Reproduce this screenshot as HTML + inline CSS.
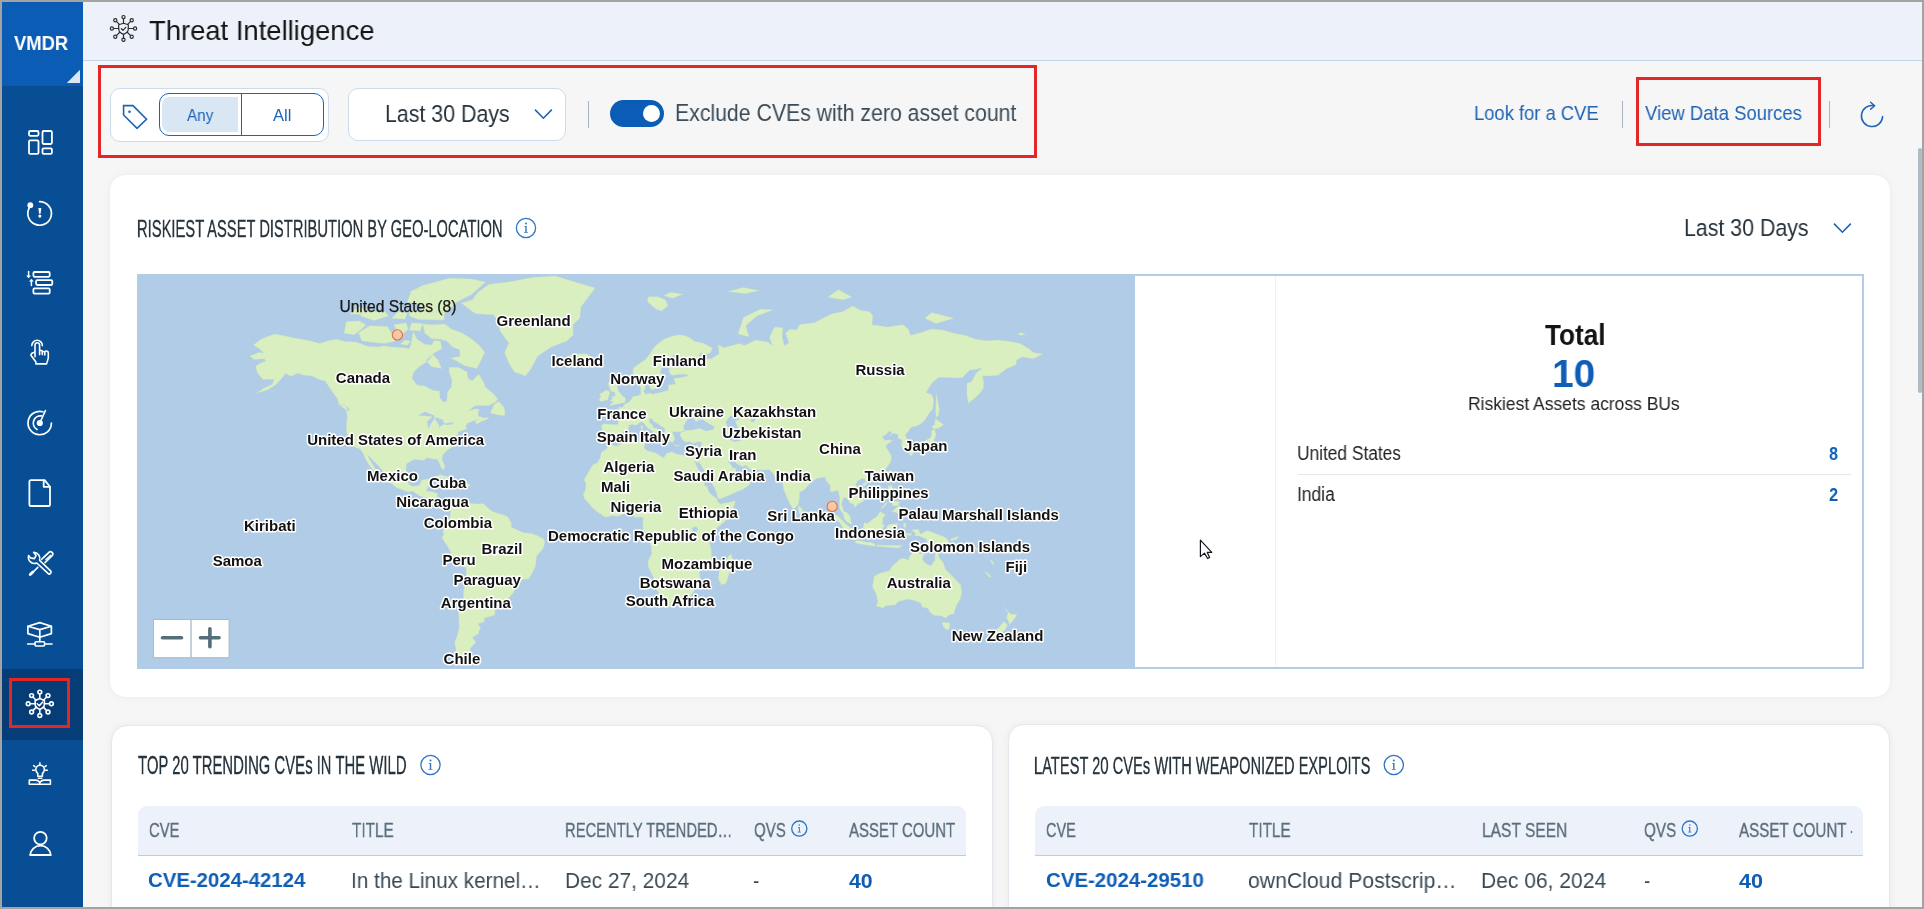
<!DOCTYPE html>
<html><head><meta charset="utf-8">
<style>
*{box-sizing:border-box;margin:0;padding:0}
html,body{width:1924px;height:909px;overflow:hidden;background:#a3a3a3;font-family:"Liberation Sans",sans-serif}
.bx{position:absolute}
.t{position:absolute;white-space:nowrap;line-height:1;transform-origin:0 0;will-change:transform}
.red{position:absolute;border:3px solid #e32727}
svg{position:absolute;overflow:visible}
</style></head><body>
<div class="bx" style="left:2px;top:2px;width:1920px;height:905px;background:#f6f6f6"></div>
<div class="bx" style="left:2px;top:2px;width:81px;height:905px;background:#084e94"></div>
<div class="bx" style="left:2px;top:2px;width:81px;height:84px;background:#0a5cb4"></div>
<svg style="left:0;top:0" width="90" height="90"><path d="M66.8 82.9 L80 82.9 L80 69.7 Z" fill="#dde7f3"/></svg>
<div class="bx" style="left:2px;top:669px;width:81px;height:71px;background:#073d77"></div>
<div class="red" style="left:9px;top:678px;width:61px;height:50px"></div>
<div class="bx" style="left:83px;top:2px;width:1839px;height:59px;background:#edf2fa;border-bottom:1px solid #c3d6ec"></div>

<!-- toolbar -->
<div class="red" style="left:98px;top:65px;width:939px;height:93px"></div>
<div class="bx" style="left:110px;top:88px;width:219px;height:54px;background:#fff;border:1px solid #c9dcf0;border-radius:10px"></div>
<div class="bx" style="left:159px;top:93px;width:165px;height:43px;border:1.3px solid #1d63b6;border-radius:10px;background:#fff"></div>
<div class="bx" style="left:162px;top:97px;width:76px;height:35px;background:#d9e6f4;border-radius:8px 0 0 8px"></div>
<div class="bx" style="left:241px;top:93.5px;width:1.2px;height:42px;background:#1d63b6"></div>
<div class="bx" style="left:348px;top:88px;width:218px;height:53px;background:#fff;border:1px solid #c9dcf0;border-radius:10px"></div>
<div class="bx" style="left:587.5px;top:101px;width:1.5px;height:27px;background:#a9b6c2"></div>
<div class="bx" style="left:610px;top:100px;width:54px;height:27px;border-radius:14px;background:#0b5cb5"></div>
<div class="bx" style="left:642.5px;top:104.8px;width:17px;height:17px;border-radius:50%;background:#fff"></div>
<div class="bx" style="left:1622px;top:101px;width:1.3px;height:27px;background:#a9b6c2"></div>
<div class="red" style="left:1636px;top:77px;width:185px;height:69px"></div>
<div class="bx" style="left:1829px;top:101px;width:1.3px;height:27px;background:#a9b6c2"></div>

<!-- map card -->
<div class="bx" style="left:110px;top:175px;width:1780px;height:522px;background:#fff;border-radius:16px;box-shadow:0 0 8px rgba(0,0,0,.05)"></div>
<div class="bx" style="left:137px;top:274px;width:1727px;height:395px;border:2px solid #b3cde8;background:#fff"></div>
<div class="bx" style="left:1275px;top:276px;width:1px;height:391px;background:#eef0f2"></div>
<div class="bx" style="left:1298px;top:474px;width:553px;height:1px;background:#e3e8ec"></div>
<div class="bx" style="left:138px;top:275px;width:997px;height:393px;background:#b0cce6;overflow:hidden">
<svg style="left:0;top:0" width="997" height="393" viewBox="0 0 997 393"><path d="M312.5 232.7L315.6 230.9L316.7 228.7L320.1 226.9L324.0 224.6L326.3 226.7L328.5 225.1L332.9 228.5L341.1 228.9L345.5 228.5L348.8 232.0L354.4 236.5L362.1 238.9L368.7 241.1L371.0 243.6L373.2 248.0L373.2 252.0L377.6 254.2L385.3 257.5L393.1 258.4L398.6 260.2L405.9 264.0L406.8 268.0L405.2 273.5L398.6 280.9L397.5 291.1L394.2 298.0L390.9 303.8L385.3 304.5L377.6 309.7L376.0 316.8L371.0 322.8L366.5 329.5L362.3 332.5L358.8 332.2L354.8 330.5L357.2 335.7L356.6 340.3L346.6 342.9L346.2 347.1L340.0 348.7L342.6 352.4L340.0 358.9L334.4 362.4L337.8 367.2L332.2 373.5L332.7 379.6L336.0 387.2L331.1 388.7L324.5 386.3L319.0 380.2L316.7 367.2L319.0 361.6L321.2 353.4L320.7 337.8L325.4 327.7L325.6 315.6L328.2 303.8L328.2 293.2L324.5 290.0L315.0 282.7L311.2 274.2L307.4 268.0L303.9 262.4L306.1 259.5L304.8 256.9L306.6 252.0L309.0 248.5L311.9 243.1L312.5 236.5L310.8 233.8L307.9 232.3L306.1 235.4L303.0 234.3L300.1 233.1L294.0 229.8L294.2 227.1L290.2 223.1L285.8 222.0L281.3 220.8L274.7 216.1L270.3 217.0L267.0 215.8L259.2 212.9L250.4 206.5L251.0 203.0L248.1 199.7L243.7 194.8L239.3 189.6L235.5 186.0L229.8 179.7L231.1 183.6L234.9 189.6L239.5 197.9L240.6 200.4L236.0 196.0L230.4 189.1L227.1 183.1L224.7 177.5L221.6 173.8L216.9 172.3L212.7 164.9L208.5 157.5L208.3 150.6L209.4 141.6L207.9 135.7L211.2 136.0L211.2 133.4L206.1 130.2L201.0 128.8L199.5 123.8L195.0 117.7L191.7 113.1L187.3 106.1L181.8 104.8L174.0 100.9L166.3 100.3L159.6 98.3L153.0 101.3L147.5 98.6L143.0 104.2L137.5 110.0L129.8 114.7L119.1 118.0L125.3 113.4L134.2 109.3L136.4 104.5L129.8 104.2L125.3 104.8L119.8 98.6L117.6 91.8L119.8 89.4L127.6 85.9L126.4 83.8L116.0 84.5L111.8 80.9L120.9 77.6L125.8 77.9L121.4 73.8L115.4 70.0L122.0 65.0L127.6 62.2L136.8 59.0L147.5 61.0L156.3 63.0L171.8 65.8L181.8 68.5L188.4 66.2L198.4 64.2L207.2 66.6L218.3 67.0L229.3 71.2L240.4 72.0L245.9 70.8L253.7 72.0L265.8 72.7L271.4 73.8L273.6 66.2L275.1 56.5L279.1 64.2L286.9 69.3L293.5 70.0L296.2 65.4L302.4 66.2L303.9 73.8L295.7 78.3L292.4 83.0L289.1 86.6L281.3 91.8L275.8 96.9L274.0 103.5L279.1 110.0L286.9 110.9L294.6 115.3L301.7 116.2L301.9 122.9L305.7 127.3L309.0 125.8L309.2 117.7L313.4 111.5L314.1 105.2L311.2 97.6L311.2 92.2L320.9 92.5L328.9 96.9L330.0 103.5L334.4 105.8L340.6 99.3L345.5 106.8L347.7 112.5L354.4 117.7L359.9 124.1L357.5 127.0L351.0 130.5L341.1 130.5L336.7 131.1L330.0 136.0L337.8 133.7L341.5 134.5L340.0 137.4L340.4 141.0L346.6 143.2L351.0 141.8L348.8 144.6L343.3 146.5L338.2 149.2L337.3 146.0L341.1 144.3L335.5 145.7L328.9 148.7L327.6 151.4L328.9 153.8L325.6 155.1L320.1 156.9L319.6 160.1L317.4 161.6L315.6 166.2L316.7 170.8L313.4 172.5L309.0 175.5L304.6 179.9L303.9 184.1L306.8 190.8L305.7 195.3L302.8 192.0L301.0 187.2L299.0 184.1L295.7 184.3L289.1 182.6L285.8 185.5L281.3 184.8L275.8 184.6L268.3 188.9L268.1 195.5L267.4 201.8L271.4 209.5L274.7 211.3L281.3 210.6L283.8 204.9L291.3 203.7L290.2 210.6L288.6 216.3L293.5 216.5L299.7 218.6L299.0 225.3L298.6 228.0L301.3 230.9L307.9 230.7ZM387.5 100.9L393.1 93.5L399.7 81.2L413.0 72.0L428.5 66.2L435.1 60.2L435.1 49.8L441.8 43.3L442.9 31.9L457.2 13.0L439.5 7.7L417.4 1.1L395.3 2.2L373.2 6.6L351.0 9.3L340.0 17.2L334.4 24.7L323.4 28.1L331.1 34.2L337.8 38.8L355.5 39.7L359.9 45.5L362.1 56.1L366.5 62.2L371.0 68.1L366.5 77.6L371.0 88.4L376.5 96.9ZM346.8 77.2L341.1 70.0L332.2 63.0L324.5 58.2L313.4 54.0L306.8 49.0L295.7 49.8L284.7 49.0L286.9 58.2L293.5 63.8L302.4 64.2L309.0 66.2L314.5 72.0L321.2 74.6L322.3 81.2L312.3 83.0L317.8 85.5L326.7 90.8L338.9 93.5L343.3 84.8ZM220.5 57.8L223.8 65.8L233.8 67.3L247.0 68.5L257.0 66.2L253.7 58.2L249.3 51.5L231.6 50.7ZM206.1 58.2L216.1 59.8L223.8 54.0L228.0 49.8L221.6 45.9L208.3 46.4ZM284.7 37.0L309.0 37.5L317.8 27.6L333.3 19.7L347.7 7.1L333.3 3.9L311.2 3.3L284.7 10.4L271.4 17.2L280.2 24.7ZM269.2 27.1L280.2 29.5L293.5 22.2L286.9 13.0L273.6 15.6ZM271.4 41.1L280.2 44.6L305.7 45.1L306.8 37.9L289.1 36.5L271.4 35.2ZM222.7 41.1L236.0 45.5L250.4 41.1L247.0 36.5L233.8 36.5L223.8 35.2ZM253.7 43.3L267.0 44.2L269.2 37.9L260.3 36.5ZM258.1 54.0L265.8 58.2L270.3 54.0L268.1 47.7L255.9 49.8ZM271.4 55.3L282.4 56.1L284.7 48.5L273.6 47.7ZM211.6 38.8L224.9 39.7L229.3 34.2L220.5 31.9ZM288.0 85.5L293.5 91.8L303.5 93.5L300.1 84.8L294.6 79.4ZM262.5 68.9L269.2 70.4L272.5 66.2L267.0 65.0ZM360.8 126.4L366.1 132.5L367.2 137.9L366.3 140.7L360.1 139.9L352.4 137.9L356.3 129.1ZM295.7 202.8L302.4 199.7L312.3 202.5L319.8 206.7L312.3 207.4L311.2 203.7L304.6 203.2ZM319.0 210.8L322.7 207.4L330.0 208.3L332.7 210.4L325.6 212.7ZM310.5 210.8L315.2 211.7L312.3 212.4ZM199.7 128.8L207.2 131.1L211.0 136.0L207.2 134.3ZM471.4 168.8L469.6 166.7L467.4 165.7L464.1 166.2L464.3 161.9L462.8 160.1L464.5 155.3L463.2 150.6L466.1 148.7L474.9 149.5L479.8 149.5L481.1 143.8L478.9 139.3L473.4 136.8L476.1 134.5L480.3 134.8L480.9 132.0L484.2 132.5L487.3 128.8L490.9 127.3L493.8 123.8L494.9 121.4L499.3 120.8L502.8 119.6L502.8 114.7L501.9 110.6L507.0 107.7L506.6 111.2L507.7 112.8L505.5 116.2L507.9 119.3L511.5 118.0L514.8 119.3L524.7 116.8L530.3 115.3L530.3 110.0L537.6 109.0L535.6 103.5L545.8 101.9L550.6 100.6L548.0 99.3L539.1 99.6L534.2 100.6L531.2 97.6L531.4 91.8L539.1 83.4L537.3 80.1L532.5 80.9L530.3 85.5L524.7 90.8L522.1 96.9L525.4 100.9L520.3 108.4L519.2 112.5L514.8 115.0L512.1 113.1L509.9 107.7L508.1 103.2L507.0 100.9L504.8 103.5L499.3 106.8L496.0 104.2L494.9 96.9L495.3 92.9L501.5 88.4L507.0 84.8L511.5 79.4L514.8 73.8L519.2 69.3L525.8 64.2L534.7 61.0L540.9 59.8L546.9 60.6L552.4 63.0L556.8 66.6L564.6 68.1L574.5 73.1L572.3 78.3L567.9 79.0L562.4 77.9L560.8 81.2L566.8 83.8L573.4 83.8L581.2 78.7L580.1 69.7L585.6 72.7L601.1 68.5L606.6 70.4L617.7 65.0L629.8 67.0L634.3 70.8L631.6 62.2L635.4 54.0L637.6 51.9L644.9 52.8L644.2 62.2L646.4 70.8L650.9 67.7L647.5 58.2L652.0 54.0L658.6 54.9L661.9 49.4L676.3 47.7L694.0 38.8L705.1 36.5L714.6 30.9L722.8 35.6L731.6 36.5L734.9 41.1L733.8 49.8L749.3 51.9L764.8 49.8L770.3 54.0L772.6 60.2L782.5 57.8L793.6 54.0L804.6 54.9L815.7 58.2L826.8 60.2L837.8 64.2L848.9 65.8L860.0 65.0L871.0 66.2L882.1 68.5L890.9 73.8L895.4 77.6L904.9 79.0L895.4 83.8L884.3 82.0L878.8 84.8L877.7 90.1L868.8 93.5L860.0 100.3L851.1 100.9L844.5 100.9L845.6 106.8L845.6 113.1L842.3 117.7L837.8 122.3L830.5 128.2L829.0 120.8L829.0 108.4L833.4 106.8L837.8 98.6L844.5 92.5L838.9 94.2L831.2 95.2L824.6 102.6L820.1 102.9L811.3 102.6L800.2 102.6L793.6 108.4L788.0 117.7L793.6 119.3L795.8 125.3L794.7 134.0L790.3 139.6L786.9 145.1L782.5 149.2L778.1 151.1L772.6 152.4L770.8 155.9L767.0 159.8L770.1 166.2L769.9 170.5L764.8 172.5L763.3 172.0L763.7 167.5L763.7 164.4L760.4 163.7L759.7 159.3L754.9 158.0L752.0 161.6L753.7 157.2L751.5 155.9L747.1 160.6L744.2 161.4L746.9 165.5L750.4 164.9L754.9 165.5L749.3 169.3L747.8 171.3L751.3 177.5L753.5 181.4L752.6 187.2L748.2 193.6L742.7 198.8L736.5 201.8L731.6 203.0L728.3 204.9L727.6 206.5L726.5 203.7L723.9 203.5L719.5 206.0L717.7 209.9L720.6 214.0L723.9 217.4L725.6 223.1L725.4 226.4L720.1 229.1L716.1 232.9L716.1 229.8L713.9 228.7L711.7 227.6L709.9 224.6L707.1 222.2L705.1 223.8L703.3 229.4L704.6 232.0L705.7 236.5L707.9 236.9L710.2 238.5L712.6 242.7L712.6 245.8L714.4 248.9L712.6 249.1L707.9 246.0L705.7 242.0L705.7 240.0L702.0 234.3L701.3 229.8L701.8 223.1L700.0 215.2L694.0 216.8L692.2 216.3L692.2 210.6L688.0 205.5L686.9 201.8L682.9 202.8L679.6 203.2L676.3 204.9L673.0 207.6L665.9 214.9L661.5 217.4L661.5 223.1L660.4 229.1L657.5 232.5L655.3 234.0L652.6 230.2L649.3 223.3L645.5 214.0L644.9 209.5L644.4 204.2L644.0 202.1L639.8 205.3L636.5 201.6L635.8 199.3L632.7 196.0L630.9 194.6L626.5 195.1L620.1 195.1L611.0 193.9L608.4 190.3L604.4 191.7L598.9 188.9L595.5 184.8L590.7 183.6L590.0 186.0L593.5 190.8L595.1 193.2L596.9 192.9L598.0 193.9L598.0 197.4L604.4 197.2L607.9 194.3L608.6 192.5L608.8 197.9L613.2 198.8L616.1 201.4L613.2 206.0L611.7 209.5L605.5 214.0L598.9 216.8L590.0 220.8L583.4 223.5L580.1 223.8L578.3 217.4L576.7 212.9L572.3 206.0L570.1 202.5L566.8 196.7L562.4 188.9L561.2 188.2L561.0 184.8L559.7 188.4L555.9 183.8L555.3 180.4L560.1 179.9L561.2 175.8L563.2 170.0L563.9 167.2L560.1 166.7L555.7 168.5L551.5 166.7L546.9 167.0L544.2 164.2L542.0 160.1L542.4 157.7L547.7 155.9L541.8 156.9L536.9 156.7L534.5 156.9L535.8 161.1L536.9 163.7L536.7 164.4L534.7 167.5L531.8 166.7L530.9 164.2L530.3 159.8L526.7 157.5L526.9 153.8L524.7 151.9L520.3 149.2L517.4 147.3L514.3 145.4L514.1 143.2L511.0 144.0L511.5 147.9L513.7 148.9L515.9 152.7L519.2 153.5L521.4 155.9L524.7 158.2L521.9 157.2L520.3 159.3L521.6 161.1L519.2 163.7L518.3 162.9L519.6 160.6L518.5 158.2L515.4 156.4L511.7 154.6L508.1 151.6L506.6 148.9L503.5 146.8L500.4 148.4L498.2 150.3L494.4 149.5L490.9 150.3L490.9 153.5L488.7 154.8L485.3 156.7L483.1 159.8L484.2 161.9L482.7 162.9L480.3 165.7L479.2 167.0L474.1 167.0ZM470.7 169.3L478.9 171.0L486.0 167.5L490.4 166.7L501.5 166.5L508.1 166.0L507.0 168.8L506.1 173.0L509.2 175.8L517.4 177.7L525.8 182.9L528.3 178.5L533.6 176.7L539.1 179.2L550.0 180.7L555.3 180.4L555.9 183.8L557.9 189.6L562.4 198.1L566.1 204.9L566.6 210.6L569.2 211.7L571.2 217.4L575.6 221.3L579.6 224.2L579.2 226.2L582.3 228.9L592.2 226.9L597.3 225.8L596.6 228.9L593.3 238.7L585.6 247.6L578.9 253.1L572.8 258.2L570.8 265.3L573.4 275.3L573.6 285.4L565.7 291.1L561.2 298.0L562.4 305.0L556.6 310.6L555.7 316.8L552.4 320.4L545.8 327.3L540.4 330.2L528.1 332.2L524.5 331.0L523.6 325.3L520.3 317.0L517.0 312.0L515.9 303.6L510.4 292.3L509.9 286.6L513.7 278.7L513.0 271.5L511.0 265.3L509.7 259.7L505.0 254.2L504.8 247.6L505.5 243.1L502.6 242.0L497.1 242.5L493.3 237.8L487.1 238.5L479.4 241.4L474.9 240.5L467.2 242.3L459.5 236.9L454.4 233.1L450.6 228.0L446.8 224.2L445.1 219.2L447.3 215.2L448.0 208.3L446.0 204.9L450.6 196.7L455.0 189.6L459.5 187.9L462.3 182.4L463.2 177.5L468.8 173.8ZM592.9 278.7L595.3 286.6L593.3 291.1L590.0 302.6L587.8 308.5L583.4 309.7L580.3 303.8L581.2 296.8L581.8 290.0L586.7 287.0L590.0 282.0ZM471.2 130.8L477.2 129.4L486.9 127.6L487.6 123.2L484.5 120.8L480.5 116.2L479.2 109.7L477.2 104.8L472.7 104.8L470.1 108.4L471.4 112.2L472.7 116.2L476.7 117.1L477.2 121.1L473.6 121.4L474.5 123.8L472.1 126.1L476.1 127.0L474.5 127.6ZM470.5 115.6L471.9 118.0L470.5 121.4L469.9 124.7L462.8 126.4L461.0 125.0L462.8 121.7L461.7 119.0L465.0 117.4L467.6 115.3ZM434.0 86.6L430.7 81.2L435.1 79.0L448.4 78.7L453.7 82.3L450.6 85.5L442.4 88.7ZM660.8 230.2L665.0 235.4L664.1 238.3L661.3 238.7L660.2 234.3ZM796.9 154.8L798.0 159.8L795.6 166.5L795.3 169.5L790.9 172.0L786.5 172.8L784.3 175.0L782.7 172.3L777.0 173.0L773.4 173.8L774.8 172.0L779.2 170.0L784.7 169.3L787.6 165.2L792.5 162.9L793.6 158.5L793.6 155.3ZM797.3 143.8L805.7 149.5L800.9 153.2L795.8 154.0L793.6 151.9L796.5 149.8ZM773.4 174.0L775.9 176.3L774.1 180.2L771.9 180.7L770.6 175.5ZM777.0 174.0L781.6 173.3L780.5 175.5L778.1 176.7ZM798.4 118.3L801.3 134.0L800.2 140.7L798.0 142.4L797.6 135.4ZM752.6 194.8L753.5 196.7L751.1 202.5L749.5 200.2L751.5 195.5ZM728.3 206.9L729.4 208.1L726.3 211.3L724.1 209.2ZM750.7 210.6L754.2 210.6L753.7 216.3L758.2 223.1L757.1 224.0L750.7 220.4L749.3 216.3ZM753.7 226.2L761.5 226.4L760.4 230.5L754.9 230.9ZM753.7 236.5L761.5 230.2L763.9 235.8L761.5 239.6L758.2 237.6ZM743.1 233.6L748.4 227.1L748.9 228.7L744.0 233.8ZM694.7 239.6L699.5 240.5L706.2 247.6L712.8 253.1L715.0 257.5L718.3 259.7L717.9 264.8L715.0 265.1L709.5 260.9L705.7 254.2L702.2 248.2L696.2 243.1ZM716.6 267.1L720.1 265.3L728.3 267.3L732.7 267.3L737.2 269.3L736.9 271.3L729.4 270.2L719.5 268.4ZM738.7 270.0L747.1 270.2L756.0 270.2L764.8 270.4L760.4 273.1L747.1 272.0L738.7 271.5ZM742.2 236.5L747.8 240.3L744.9 242.3L744.5 249.8L747.1 250.0L743.8 254.2L741.6 259.7L737.2 260.9L727.9 258.6L725.0 253.1L726.3 247.6L729.4 248.5L733.8 244.9L739.4 240.9ZM748.2 264.2L750.2 264.2L751.1 258.2L752.6 262.2L756.4 262.4L752.6 256.2L757.1 254.0L760.4 248.7L751.5 249.3L749.3 250.9L747.1 257.5ZM765.9 247.6L768.1 248.7L767.0 253.8L765.5 250.9ZM767.0 258.6L773.7 258.6L772.6 260.4L767.0 260.0ZM773.7 254.9L780.3 254.0L782.5 259.3L789.2 255.5L795.8 257.8L806.4 262.0L810.2 265.3L811.3 269.7L815.7 274.9L809.1 274.2L802.4 269.3L795.8 272.2L789.2 270.4L788.7 264.2L781.4 260.9L777.0 260.9L777.6 258.2ZM811.9 264.4L815.7 263.1L820.6 261.3L819.0 264.2L813.5 265.7ZM736.0 301.5L741.6 298.2L751.5 295.7L754.2 291.1L757.1 288.8L761.5 284.3L765.9 283.2L770.3 285.4L771.9 280.5L775.9 277.1L782.5 278.7L786.3 279.1L784.3 284.3L786.9 287.7L792.5 291.1L796.9 285.4L796.9 279.8L799.1 275.8L801.3 283.2L805.3 287.7L807.5 294.5L813.5 300.3L817.9 305.0L822.6 309.7L823.7 317.0L822.3 324.1L818.6 330.0L815.7 339.1L811.3 339.8L807.7 343.2L803.5 341.1L795.8 340.3L792.5 337.8L790.3 334.0L788.0 332.5L784.7 332.5L782.5 327.7L775.9 325.3L769.2 324.3L760.4 326.5L757.1 330.0L748.2 330.7L744.7 333.0L738.3 331.0L739.8 326.5L738.3 319.2L734.3 311.3L735.6 306.1ZM804.0 347.3L811.9 347.9L811.3 354.0L808.6 355.1L805.1 351.3ZM865.9 331.2L869.9 336.5L872.8 339.1L878.8 339.6L876.6 343.7L871.5 349.7L870.1 345.0L868.4 343.4L870.1 337.8ZM866.2 346.8L869.5 350.0L866.6 355.6L862.2 358.9L856.6 363.3L852.2 361.6L856.2 356.1L861.1 352.6L864.4 348.1ZM509.2 26.6L518.1 34.2L523.6 36.1L530.3 30.5L526.9 24.7L520.3 21.7L510.4 21.7ZM525.8 20.7L534.7 23.2L544.6 19.2L532.5 17.2ZM600.0 59.0L611.0 61.8L607.7 50.7L618.8 41.1L635.6 34.7L622.1 34.2L605.5 42.4ZM689.6 22.2L705.1 24.7L713.9 22.2L700.6 14.6ZM786.9 43.3L798.0 48.5L815.7 43.3L793.6 37.5ZM590.0 16.6L607.7 18.7L621.0 15.6L605.5 12.5ZM878.8 59.0L883.2 60.6L887.6 59.0L883.2 57.8ZM502.8 150.6L504.8 150.8L504.6 154.8L503.1 153.8ZM502.2 155.9L505.3 155.9L505.0 160.8L502.4 161.1ZM511.2 163.4L518.3 162.9L517.2 167.0L511.5 164.7ZM535.8 169.8L542.0 170.5L538.7 171.5ZM555.3 171.3L560.4 169.5L558.8 172.0ZM876.1 291.1L879.0 290.4L878.8 292.7L876.1 292.3ZM852.2 285.4L854.0 285.4L856.0 289.5L854.4 289.5ZM846.7 296.8L848.5 297.3L853.3 301.5L851.6 302.2ZM830.1 267.5L832.3 268.2L836.7 271.5L839.6 273.8L841.2 275.3L837.8 274.2L833.4 271.3L830.1 269.3Z" fill="#daefc0" stroke="#c9ddc0" stroke-width="0.4"/><path d="M545.8 155.3L548.0 155.3L553.5 155.3L561.2 153.2L567.9 155.9L575.6 154.6L576.1 151.4L572.3 149.5L566.8 146.0L564.6 144.6L561.2 145.1L558.1 146.8L555.7 144.0L552.4 140.7L550.2 142.9L549.3 145.1L547.1 147.9L545.5 151.6ZM561.2 143.8L564.6 144.0L568.5 140.7L570.5 139.1L566.8 139.3L561.2 141.6ZM587.8 146.5L592.2 141.0L597.8 139.6L601.1 144.3L597.1 146.5L600.4 153.2L601.1 158.5L603.3 163.7L603.1 165.5L596.6 167.0L592.2 164.7L593.3 157.7L595.3 157.5L591.1 153.2L588.9 150.6ZM612.8 141.6L617.7 142.9L616.6 146.5L613.2 147.3ZM280.2 140.5L286.9 136.8L295.7 140.2L296.8 142.9L293.5 147.9L290.2 154.0L289.1 146.5L294.6 141.8L289.1 141.0ZM297.9 142.4L304.6 144.6L307.2 150.0L315.2 149.2L314.5 147.3L306.8 148.4L300.1 153.2L301.3 150.6L296.8 143.8ZM554.2 253.1L557.9 251.3L560.1 254.2L557.9 258.2L554.6 256.4Z" fill="#b1cde7"/>
<svg style="left:0;top:0;will-change:transform" width="997" height="393" viewBox="0 0 997 393">
<g font-family="Liberation Sans" font-weight="bold" font-size="15" fill="#111" stroke="#fff" stroke-width="3" stroke-linejoin="round" paint-order="stroke">
<text x="358.5" y="50.5">Greenland</text>
<text x="413.6" y="90.5">Iceland</text>
<text x="514.8" y="90.5">Finland</text>
<text x="472.2" y="108.6">Norway</text>
<text x="197.8" y="107.9">Canada</text>
<text x="717.5" y="100.0">Russia</text>
<text x="459.3" y="144.3">France</text>
<text x="531.0" y="142.0">Ukraine</text>
<text x="594.9" y="142.0">Kazakhstan</text>
<text x="458.8" y="167.2">Spain</text>
<text x="502.1" y="167.2">Italy</text>
<text x="584.3" y="163.2">Uzbekistan</text>
<text x="169.2" y="169.8">United States of America</text>
<text x="547.1" y="180.5">Syria</text>
<text x="590.9" y="185.4">Iran</text>
<text x="681.1" y="178.7">China</text>
<text x="766.1" y="175.9">Japan</text>
<text x="465.5" y="196.7">Algeria</text>
<text x="535.4" y="205.6">Saudi Arabia</text>
<text x="637.8" y="205.6">India</text>
<text x="726.4" y="206.0">Taiwan</text>
<text x="229.1" y="206.0">Mexico</text>
<text x="290.9" y="212.9">Cuba</text>
<text x="462.9" y="216.5">Mali</text>
<text x="710.6" y="223.4">Philippines</text>
<text x="258.2" y="231.9">Nicaragua</text>
<text x="472.4" y="236.7">Nigeria</text>
<text x="540.8" y="242.7">Ethiopia</text>
<text x="629.3" y="246.2">Sri Lanka</text>
<text x="760.4" y="244.0">Palau</text>
<text x="804.1" y="244.8">Marshall Islands</text>
<text x="106.0" y="255.5">Kiribati</text>
<text x="285.7" y="252.5">Colombia</text>
<text x="697.0" y="262.5">Indonesia</text>
<text x="410.0" y="265.6">Democratic Republic of the Congo</text>
<text x="772.1" y="277.3">Solomon Islands</text>
<text x="343.5" y="278.8">Brazil</text>
<text x="304.4" y="289.8">Peru</text>
<text x="74.7" y="290.7">Samoa</text>
<text x="523.5" y="293.8">Mozambique</text>
<text x="867.5" y="297.2">Fiji</text>
<text x="315.4" y="309.7">Paraguay</text>
<text x="501.7" y="312.6">Botswana</text>
<text x="748.7" y="313.3">Australia</text>
<text x="487.7" y="331.4">South Africa</text>
<text x="302.8" y="332.6">Argentina</text>
<text x="813.7" y="366.2">New Zealand</text>
<text x="305.6" y="389.3">Chile</text>
</g>
<text x="201.4" y="37.4" font-family="Liberation Sans" font-size="15.6" fill="#181818" stroke="#181818" stroke-width="0.25">United States (8)</text>
<circle cx="259.4" cy="59.9" r="5.1" fill="#f8c8a8" stroke="#e5733a" stroke-width="1.1"/>
<circle cx="694.2" cy="231.4" r="5.1" fill="#f8c8a8" stroke="#e5733a" stroke-width="1.1"/>
<rect x="15.5" y="344.5" width="75.6" height="38.2" fill="#fff" stroke="#aab9c3" stroke-width="1"/>
<line x1="53.0" y1="345.0" x2="53.0" y2="382.0" stroke="#aab9c3" stroke-width="1.3"/>
<g stroke="#546e7a" stroke-width="3.6" stroke-linecap="round">
<line x1="24.5" y1="362.8" x2="43.5" y2="362.8"/>
<line x1="62.5" y1="362.8" x2="81.0" y2="362.8"/>
<line x1="71.9" y1="353.8" x2="71.9" y2="371.8"/>
</g></svg>
</div>

<!-- bottom cards -->
<div class="bx" style="left:111px;top:725px;width:882px;height:200px;background:#fff;border:1px solid #e2e8ed;border-radius:16px;box-shadow:0 0 8px rgba(0,0,0,.05)"></div>
<div class="bx" style="left:1008px;top:724px;width:882px;height:200px;background:#fff;border:1px solid #e2e8ed;border-radius:16px;box-shadow:0 0 8px rgba(0,0,0,.05)"></div>
<div class="bx" style="left:138px;top:806px;width:828px;height:50px;background:#edf2fa;border-bottom:1px solid #b8cfe8;border-radius:9px 9px 0 0"></div>
<div class="bx" style="left:1035px;top:806px;width:828px;height:50px;background:#edf2fa;border-bottom:1px solid #b8cfe8;border-radius:9px 9px 0 0"></div>

<svg style="left:0;top:0" width="1924" height="909" viewBox="0 0 1924 909">
<g fill="none" stroke="#fff" stroke-width="1.8" stroke-linejoin="round" stroke-linecap="round">
 <!-- dashboard -->
 <rect x="29" y="131" width="9.5" height="4.8" rx="1.2"/>
 <rect x="29" y="140.3" width="9.5" height="13.6" rx="1.2"/>
 <rect x="42.5" y="131" width="9.4" height="13" rx="1.2"/>
 <rect x="42.5" y="148.4" width="9.4" height="5.5" rx="1.2"/>
 <!-- alert circle -->
 <path d="M39.6 201.6 A11.8 11.8 0 1 1 29.6 207.2" stroke-width="1.7"/>
 <!-- list sort -->
 <rect x="33.4" y="272" width="16.3" height="4.8" rx="1.2"/>
 <rect x="36.1" y="280.2" width="16.2" height="4.8" rx="1.2"/>
 <rect x="33.4" y="288.3" width="16.3" height="5.3" rx="1.2"/>
 <path d="M28.6 271.5 V276" stroke-width="1.5"/>
 <path d="M31.4 285.5 V281.5" stroke-width="1.5"/>
 <!-- hand -->
 <path d="M31.8 345.6 A5.3 5.3 0 0 1 42.4 345.6" stroke-width="1.6"/>
 <path d="M35 356.8 V345 A2.3 2.3 0 0 1 39.6 345 V354.6 M39.6 350 L42.3 350.9 V354.6 M42.3 351.2 L44.8 351.8 V355 M44.8 352.3 A1.8 1.8 0 0 1 48.3 353 V358 L46.6 363.9 H35.9 L35.9 362 L30.9 355.3 A3 3 0 0 1 35 352.8" stroke-width="1.6"/>
 <!-- radar -->
 <path d="M51.4 423.2 A11.7 11.7 0 1 1 42.9 411.8" stroke-width="1.7"/>
 <path d="M37 429.5 A7.3 7.3 0 0 1 41.5 415.9" stroke-width="1.7"/>
 <path d="M39.8 423 L45.4 410.6" stroke-width="1.6"/>
 <!-- document -->
 <path d="M44.6 480.1 H31 A1.6 1.6 0 0 0 29.4 481.7 V504.4 A1.6 1.6 0 0 0 31 506 H48.4 A1.6 1.6 0 0 0 50 504.4 V486.7 Z"/>
 <path d="M43.7 480.5 V486.8 H50"/>
 <!-- tools -->
 <path d="M36.8 563 L48 573.4 A1.8 1.8 0 0 0 50.6 570.9 L39.6 560.3 A6.2 6.2 0 0 0 33.6 552.3 L36.1 555.4 L34.4 558.6 L30.6 557.9 L28.6 555.5 A6.2 6.2 0 0 0 36.8 563 Z" stroke-width="1.6"/>
 <path d="M41.6 559.3 L48.9 552.4 A2.3 2.3 0 0 1 52.2 555.6 L45 562.6" stroke-width="1.6"/>
 <path d="M44.1 556.9 L48.9 552.6 M45.7 559.7 L50.6 555.2" stroke-width="1.2"/>
 <path d="M37.8 567.4 L32.9 572.2" stroke-width="1.6"/>
 <path d="M32.9 572 L30.2 574.6" stroke-width="2.8"/>
 <!-- cube network -->
 <path d="M27.9 626.2 L39.8 622.6 L51.4 626.2 L39.8 629.6 Z M27.9 626.2 V633.6 L39.8 637.2 L51.4 633.6 V626.2 M39.8 629.6 V641.5" stroke-width="1.7"/>
 <rect x="35" y="641.8" width="9.6" height="4.2" rx="1" stroke-width="1.6"/>
 <path d="M27.6 644 H35 M44.6 644 H52" stroke-width="1.6"/>
 <!-- threat intel active -->
 <g stroke-width="1.6">
 <path d="M39.8 698.6 L44.4 700.4 V704.6 Q44.4 707.6 39.8 709.4 Q35.2 707.6 35.2 704.6 V700.4 Z"/>
 <path d="M37.3 703.8 L39.3 705.8 L42.5 702.2"/>
 <path d="M39.8 694.2 V698.6 M39.8 709.4 V713.4 M30.2 703.8 H35.2 M44.4 703.8 H49.4 M33.1 697.3 L36.2 700.3 M46.5 697.3 L43.4 700.3 M33.1 710.3 L36.4 707.2 M46.5 710.3 L43.2 707.2"/>
 <circle cx="39.8" cy="692.1" r="1.9"/><circle cx="39.8" cy="715.5" r="1.9"/>
 <circle cx="28.2" cy="703.8" r="1.9"/><circle cx="51.4" cy="703.8" r="1.9"/>
 <circle cx="31.6" cy="695.6" r="1.9"/><circle cx="48" cy="695.6" r="1.9"/>
 <circle cx="31.6" cy="712" r="1.9"/><circle cx="48" cy="712" r="1.9"/>
 </g>
 <!-- bulb book -->
 <path d="M37.8 776.2 V773.6 Q35.8 771.5 35.8 769.6 A4.3 4.3 0 0 1 44.4 769.6 Q44.4 771.5 42.4 773.6 V776.2 Z" stroke-width="1.6"/>
 <path d="M38.3 778.3 H41.8 M39.9 762.8 V764.6 M33.6 765.6 L35 766.7 M46.3 765.6 L44.9 766.7 M32.6 770.3 H34.4 M45.5 770.3 H47.3" stroke-width="1.5"/>
 <path d="M29.3 780.1 H35.5 Q38.5 780.1 39.8 782.6 Q41.2 780.1 44.2 780.1 H50.4 V784.2 H29.3 Z M39.8 782.6 V784.2" stroke-width="1.6"/>
 <!-- user -->
 <circle cx="40.4" cy="838.1" r="6.3"/>
 <path d="M30.1 855 A10.4 10.4 0 0 1 50.8 855 Z"/>
</g>
<g fill="#fff">
 <circle cx="30.3" cy="205.2" r="2.9"/>
 <path d="M38.4 208 H41.3 L40.6 213.8 H39.1 Z"/>
 <circle cx="39.85" cy="216.1" r="1.55"/>
 <path d="M26.2 275.4 L31 275.4 L28.6 278.2 Z"/>
 <path d="M29 281.6 L33.8 281.6 L31.4 278.8 Z"/>
 <circle cx="39.8" cy="423" r="3.1"/>
</g>
<!-- title icon -->
<g fill="none" stroke="#2e2e2e" stroke-width="1.2" stroke-linecap="round" stroke-linejoin="round">
 <path d="M123.5 23.2 L128.3 24.8 V29 Q128.3 32.4 123.5 34.4 Q118.7 32.4 118.7 29 V24.8 Z"/>
 <path d="M121.3 28.7 L123 30.3 L125.8 27.3"/>
 <path d="M123.5 18.8 V23.2 M123.5 34.4 V38.2 M113.6 28.5 H118.7 M128.3 28.5 H133.4 M116.4 21.4 L119.4 24.4 M130.6 21.4 L127.6 24.4 M116.4 35.6 L119.5 32.5 M130.6 35.6 L127.5 32.5"/>
 <circle cx="123.5" cy="17.1" r="1.6"/><circle cx="123.5" cy="39.8" r="1.6"/>
 <circle cx="111.9" cy="28.5" r="1.6"/><circle cx="135.1" cy="28.5" r="1.6"/>
 <circle cx="115.3" cy="20.3" r="1.6"/><circle cx="131.7" cy="20.3" r="1.6"/>
 <circle cx="115.3" cy="36.7" r="1.6"/><circle cx="131.7" cy="36.7" r="1.6"/>
</g>
<!-- tag -->
<g fill="none" stroke="#1d63b6" stroke-width="1.6" stroke-linejoin="miter">
 <path d="M123.6 105.6 H133 L146.5 119.2 L137 128.4 L123.6 115 Z"/>
</g>
<circle cx="129.5" cy="111.7" r="1.3" fill="#1d63b6"/>
<!-- chevrons -->
<path d="M535 109.6 L543.4 118.2 L551.8 109.6" fill="none" stroke="#1d63b6" stroke-width="1.6"/>
<path d="M1834 223.6 L1842.4 232.2 L1850.8 223.6" fill="none" stroke="#1d63b6" stroke-width="1.6"/>
<!-- refresh -->
<g fill="none" stroke="#1d63b6" stroke-width="1.5" stroke-linecap="round" stroke-linejoin="round">
 <path d="M1882.6 116.6 A10.6 10.6 0 1 1 1874 105.6"/>
 <path d="M1870.6 102.3 L1874.6 105.7 L1870.6 109.3"/>
</g>
<!-- info icons -->
<g fill="none" stroke="#2f74c4" stroke-width="1.3">
 <circle cx="526" cy="228" r="9.6"/>
 <circle cx="430.5" cy="765" r="9.6"/>
 <circle cx="1393.8" cy="765" r="9.6"/>
 <circle cx="799.3" cy="828.6" r="7.6"/>
 <circle cx="1689.8" cy="828.6" r="7.6"/>
</g>
<g fill="#2f74c4"><path d="M524.4 226.0 H526.7 V231.9 H527.9 V232.8 H524.0 V231.9 H525.3 V226.8 H524.4 Z"/><circle cx="526.0" cy="223.4" r="1"/><path d="M428.9 763.0 H431.2 V768.9 H432.4 V769.8 H428.5 V768.9 H429.8 V763.8 H428.9 Z"/><circle cx="430.5" cy="760.4" r="1"/><path d="M1392.2 763.0 H1394.5 V768.9 H1395.7 V769.8 H1391.8 V768.9 H1393.1 V763.8 H1392.2 Z"/><circle cx="1393.8" cy="760.4" r="1"/><path d="M798.0 827.0 H799.8 V831.8 H800.8 V832.5 H797.7 V831.8 H798.8 V827.7 H798.0 Z"/><circle cx="799.3" cy="825.0" r="0.8"/><path d="M1688.5 827.0 H1690.3 V831.8 H1691.3 V832.5 H1688.2 V831.8 H1689.2 V827.7 H1688.5 Z"/><circle cx="1689.8" cy="825.0" r="0.8"/></g>
<ellipse cx="1851.5" cy="832" rx="0.8" ry="1.2" fill="#3f7fd0"/>
<!-- cursor -->
<path d="M1200.4 540.2 V556.6 L1204.4 553.1 L1207.7 558.5 L1209.6 557.4 L1207.3 552.4 L1211.8 552.3 Z" fill="#fff" stroke="#14141e" stroke-width="1.2" stroke-linejoin="round"/>
</svg>

<div class="t" style="left:14.00px;top:33.13px;font-size:20.640px;font-weight:bold;color:#ffffff;transform:scaleX(0.8917)">VMDR</div>
<div class="t" style="left:148.50px;top:15.88px;font-size:28.488px;font-weight:normal;color:#141414;transform:scaleX(0.9627)">Threat Intelligence</div>
<div class="t" style="left:186.70px;top:107.04px;font-size:16.134px;font-weight:normal;color:#1d63b6;transform:scaleX(0.9464)">Any</div>
<div class="t" style="left:273.00px;top:106.80px;font-size:16.424px;font-weight:normal;color:#1d63b6;transform:scaleX(1.0118)">All</div>
<div class="t" style="left:384.75px;top:102.84px;font-size:23.110px;font-weight:normal;color:#26323b;transform:scaleX(0.9242)">Last 30 Days</div>
<div class="t" style="left:674.57px;top:101.81px;font-size:23.256px;font-weight:normal;color:#3b4b57;transform:scaleX(0.9140)">Exclude CVEs with zero asset count</div>
<div class="t" style="left:1473.71px;top:103.01px;font-size:20.785px;font-weight:normal;color:#1d63b6;transform:scaleX(0.8856)">Look for a CVE</div>
<div class="t" style="left:1645.40px;top:103.17px;font-size:20.349px;font-weight:normal;color:#1d63b6;transform:scaleX(0.9099)">View Data Sources</div>
<div class="t" style="left:137.01px;top:216.68px;font-size:24.709px;font-weight:normal;color:#27333c;transform:scaleX(0.5966);-webkit-text-stroke:0.35px #27333c">RISKIEST ASSET DISTRIBUTION BY GEO-LOCATION</div>
<div class="t" style="left:1684.25px;top:217.04px;font-size:23.110px;font-weight:normal;color:#26323b;transform:scaleX(0.9235)">Last 30 Days</div>
<div class="t" style="left:1544.70px;top:320.05px;font-size:29.360px;font-weight:bold;color:#141414;transform:scaleX(0.8909)">Total</div>
<div class="t" style="left:1552.44px;top:354.28px;font-size:39.716px;font-weight:bold;color:#0f5db5;transform:scaleX(0.9805)">10</div>
<div class="t" style="left:1468.04px;top:395.02px;font-size:18.169px;font-weight:normal;color:#222222;transform:scaleX(0.9626)">Riskiest Assets across BUs</div>
<div class="t" style="left:1297.40px;top:444.44px;font-size:19.331px;font-weight:normal;color:#222222;transform:scaleX(0.8965)">United States</div>
<div class="t" style="left:1828.70px;top:445.23px;font-size:18.156px;font-weight:bold;color:#0f5db5;transform:scaleX(0.8900)">8</div>
<div class="t" style="left:1297.40px;top:485.34px;font-size:19.331px;font-weight:normal;color:#222222;transform:scaleX(0.9024)">India</div>
<div class="t" style="left:1828.70px;top:485.99px;font-size:18.440px;font-weight:bold;color:#0f5db5;transform:scaleX(0.8900)">2</div>
<div class="t" style="left:138.30px;top:753.66px;font-size:24.855px;font-weight:normal;color:#27333c;transform:scaleX(0.5991);-webkit-text-stroke:0.35px #27333c">TOP 20 TRENDING CVEs IN THE WILD</div>
<div class="t" style="left:1034.21px;top:753.68px;font-size:24.709px;font-weight:normal;color:#27333c;transform:scaleX(0.5947);-webkit-text-stroke:0.35px #27333c">LATEST 20 CVEs WITH WEAPONIZED EXPLOITS</div>
<div class="t" style="left:148.86px;top:820.64px;font-size:19.913px;font-weight:normal;color:#596d7b;transform:scaleX(0.7400);-webkit-text-stroke:0.35px #596d7b">CVE</div>
<div class="t" style="left:351.90px;top:820.64px;font-size:19.913px;font-weight:normal;color:#596d7b;transform:scaleX(0.7685);-webkit-text-stroke:0.35px #596d7b">TITLE</div>
<div class="t" style="left:565.36px;top:820.64px;font-size:19.913px;font-weight:normal;color:#596d7b;transform:scaleX(0.7414);-webkit-text-stroke:0.35px #596d7b">RECENTLY TRENDED…</div>
<div class="t" style="left:754.24px;top:820.64px;font-size:19.913px;font-weight:normal;color:#596d7b;transform:scaleX(0.7575);-webkit-text-stroke:0.35px #596d7b">QVS</div>
<div class="t" style="left:849.30px;top:820.64px;font-size:19.913px;font-weight:normal;color:#596d7b;transform:scaleX(0.7518);-webkit-text-stroke:0.35px #596d7b">ASSET COUNT</div>
<div class="t" style="left:1046.08px;top:820.64px;font-size:19.913px;font-weight:normal;color:#596d7b;transform:scaleX(0.7250);-webkit-text-stroke:0.35px #596d7b">CVE</div>
<div class="t" style="left:1249.00px;top:820.64px;font-size:19.913px;font-weight:normal;color:#596d7b;transform:scaleX(0.7667);-webkit-text-stroke:0.35px #596d7b">TITLE</div>
<div class="t" style="left:1482.12px;top:820.64px;font-size:19.913px;font-weight:normal;color:#596d7b;transform:scaleX(0.7813);-webkit-text-stroke:0.35px #596d7b">LAST SEEN</div>
<div class="t" style="left:1644.33px;top:820.64px;font-size:19.913px;font-weight:normal;color:#596d7b;transform:scaleX(0.7650);-webkit-text-stroke:0.35px #596d7b">QVS</div>
<div class="t" style="left:1739.40px;top:820.64px;font-size:19.913px;font-weight:normal;color:#596d7b;transform:scaleX(0.7617);-webkit-text-stroke:0.35px #596d7b">ASSET COUNT</div>
<div class="t" style="left:148.41px;top:870.23px;font-size:20.640px;font-weight:bold;color:#0f5db5;transform:scaleX(0.9868)">CVE-2024-42124</div>
<div class="t" style="left:350.84px;top:869.78px;font-size:22.238px;font-weight:normal;color:#3a4a55;transform:scaleX(0.9312)">In the Linux kernel…</div>
<div class="t" style="left:564.95px;top:869.53px;font-size:22.529px;font-weight:normal;color:#3a4a55;transform:scaleX(0.9273)">Dec 27, 2024</div>
<div class="t" style="left:753.45px;top:869.78px;font-size:22.238px;font-weight:normal;color:#3a4a55;transform:scaleX(0.8500)">-</div>
<div class="t" style="left:849.30px;top:870.57px;font-size:20.709px;font-weight:bold;color:#0f5db5;transform:scaleX(1.0304)">40</div>
<div class="t" style="left:1045.81px;top:870.23px;font-size:20.640px;font-weight:bold;color:#0f5db5;transform:scaleX(0.9899)">CVE-2024-29510</div>
<div class="t" style="left:1248.05px;top:869.78px;font-size:22.238px;font-weight:normal;color:#3a4a55;transform:scaleX(0.9544)">ownCloud Postscrip…</div>
<div class="t" style="left:1481.03px;top:869.53px;font-size:22.529px;font-weight:normal;color:#3a4a55;transform:scaleX(0.9348)">Dec 06, 2024</div>
<div class="t" style="left:1643.67px;top:869.78px;font-size:22.238px;font-weight:normal;color:#3a4a55;transform:scaleX(0.8333)">-</div>
<div class="t" style="left:1739.40px;top:870.57px;font-size:20.709px;font-weight:bold;color:#0f5db5;transform:scaleX(1.0435)">40</div>

<!-- scrollbar -->
<div class="bx" style="left:1918px;top:148px;width:4px;height:245px;background:#aebcc6;border-radius:2px"></div>
<div class="bx" style="left:0;top:0;width:1924px;height:909px;border:2px solid #a3a3a3"></div>
</body></html>
